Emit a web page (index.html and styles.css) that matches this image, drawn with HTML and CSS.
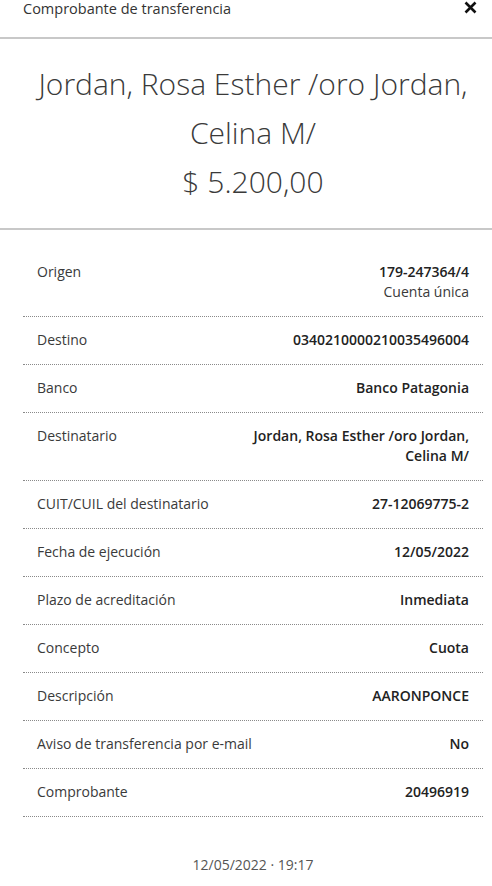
FILE: index.html
```html
<!DOCTYPE html>
<html lang="es">
<head>
<meta charset="utf-8">
<title>Comprobante de transferencia</title>
<link rel="stylesheet" href="styles.css">
</head>
<body>
<div class="modal">
  <header class="modal-header">
    <h1 class="modal-title">Comprobante de transferencia</h1>
    <button class="close-btn" aria-label="Cerrar">
      <svg width="13" height="13" viewBox="0 0 13 13"><path d="M1.5 1.5 L11.5 11.5 M11.5 1.5 L1.5 11.5" stroke="#111" stroke-width="2.6" stroke-linecap="butt"/></svg>
    </button>
  </header>
  <section class="hero">
    <div class="hero-name">Jordan, Rosa Esther /oro Jordan, Celina M/</div>
    <div class="hero-amount">$ 5.200,00</div>
  </section>
  <section class="details">
    <div class="row">
      <div class="label">Origen</div>
      <div class="value"><div>179-247364/4</div><div class="sub">Cuenta única</div></div>
    </div>
    <div class="row">
      <div class="label">Destino</div>
      <div class="value">0340210000210035496004</div>
    </div>
    <div class="row">
      <div class="label">Banco</div>
      <div class="value">Banco Patagonia</div>
    </div>
    <div class="row">
      <div class="label">Destinatario</div>
      <div class="value">Jordan, Rosa Esther /oro Jordan, Celina M/</div>
    </div>
    <div class="row">
      <div class="label">CUIT/CUIL del destinatario</div>
      <div class="value">27-12069775-2</div>
    </div>
    <div class="row">
      <div class="label">Fecha de ejecución</div>
      <div class="value">12/05/2022</div>
    </div>
    <div class="row">
      <div class="label">Plazo de acreditación</div>
      <div class="value">Inmediata</div>
    </div>
    <div class="row">
      <div class="label">Concepto</div>
      <div class="value">Cuota</div>
    </div>
    <div class="row">
      <div class="label">Descripción</div>
      <div class="value">AARONPONCE</div>
    </div>
    <div class="row">
      <div class="label">Aviso de transferencia por e-mail</div>
      <div class="value">No</div>
    </div>
    <div class="row">
      <div class="label">Comprobante</div>
      <div class="value">20496919</div>
    </div>
  </section>
  <footer class="stamp">12/05/2022 · 19:17</footer>
</div>
</body>
</html>
```

FILE: styles.css
```css
* { box-sizing: border-box; }
html, body { margin: 0; padding: 0; background: #fff; }
body {
  font-family: "Open Sans", "Noto Sans", sans-serif;
  color: #333;
  width: 492px;
}
.modal-header {
  height: 39px;
  display: flex;
  justify-content: space-between;
  align-items: flex-start;
  padding: 0 13px 0 23px;
  border-bottom: 2px solid #c8c8c8;
}
.modal-title {
  margin: 0;
  font-size: 14.5px;
  line-height: 18px;
  font-weight: 500;
  color: #333;
}
.close-btn {
  border: 0;
  background: none;
  padding: 0;
  margin-top: 0;
  width: 17px;
  height: 14px;
  display: flex;
  align-items: center;
  justify-content: center;
}
.hero {
  padding: 20px 9px 22px 23px;
  text-align: center;
  font-size: 30px;
  font-weight: 300;
  line-height: 49px;
  color: #3a3a3a;
  border-bottom: 2px solid #c8c8c8;
}
.details {
  padding: 19px 9px 0 23px;
}
.row {
  display: flex;
  justify-content: space-between;
  align-items: flex-start;
  gap: 16px;
  padding: 13px 14px 14px;
  border-bottom: 1px dotted #8a8a8a;
  font-size: 14px;
  line-height: 20px;
}
.label {
  color: #3a3a3a;
  flex: 1 1 auto;
}
.value {
  text-align: right;
  font-weight: 600;
  color: #222;
  max-width: 240px;
}
.value .sub {
  font-weight: 400;
  color: #3a3a3a;
}
.stamp {
  padding: 38px 9px 0 23px;
  text-align: center;
  font-size: 14px;
  line-height: 20px;
  color: #555;
}
```
